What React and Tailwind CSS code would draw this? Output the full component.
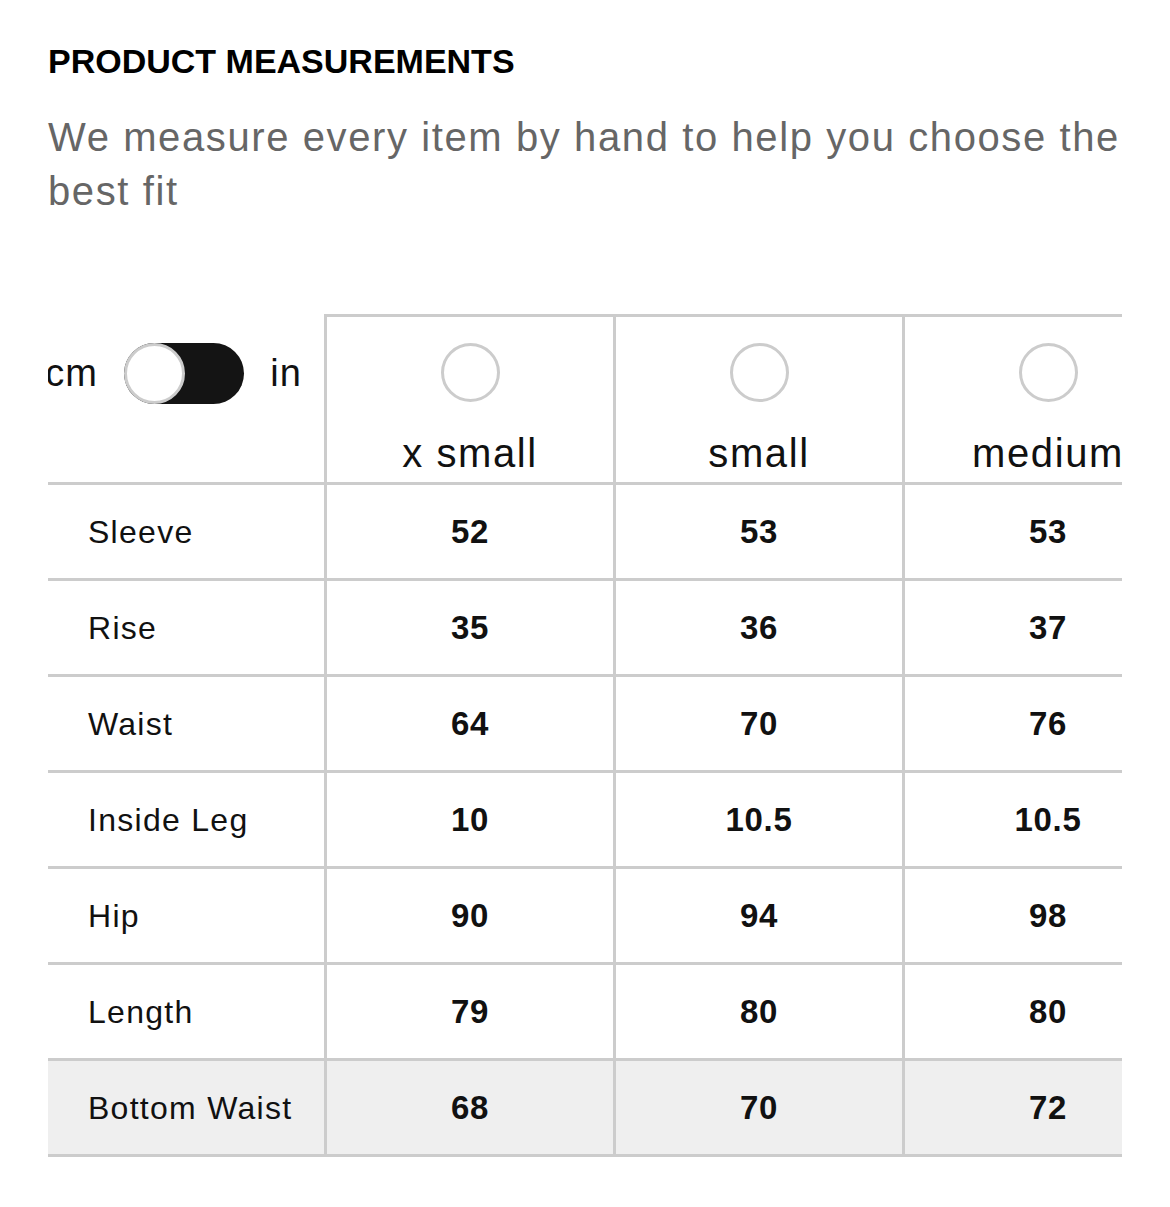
import React, { useState } from "react";

const sizes = ["x small", "small", "medium"];

const rows = [
  { label: "Sleeve", values: ["52", "53", "53"] },
  { label: "Rise", values: ["35", "36", "37"] },
  { label: "Waist", values: ["64", "70", "76"] },
  { label: "Inside Leg", values: ["10", "10.5", "10.5"] },
  { label: "Hip", values: ["90", "94", "98"] },
  { label: "Length", values: ["79", "80", "80"] },
  { label: "Bottom Waist", values: ["68", "70", "72"] },
];

const font = { fontFamily: '"Liberation Sans", Arial, sans-serif' };

const App = () => {
  const [inches, setInches] = useState(false);

  return (
    <div className="min-h-[1207px] w-[1170px] bg-white pt-[38px] text-[#111]" style={font}>
      <div className="px-[48px]">
        <h2 className="text-[34px] font-bold leading-[46px] text-black">
          PRODUCT MEASUREMENTS
        </h2>
        <p className="mt-[26px] w-[1090px] text-[40px] leading-[54px] tracking-[0.04em] text-[#666]">
          We measure every item by hand to help you choose the best fit
        </p>
      </div>

      <div className="mt-[96px] ml-[48px] w-[1074px] overflow-hidden">
        <div className="w-max">
          {/* header row */}
          <div className="flex border-b-[3px] border-[#ccc]">
            <div className="flex w-[279px] items-start justify-end gap-[26px] border-r-[3px] border-[#ccc] pt-[29px] pr-[22px]">
              <span className="text-[38px] leading-[60px] tracking-[0.03em]">cm</span>
              <button
                onClick={() => setInches(!inches)}
                className="relative h-[61px] w-[120px] shrink-0 rounded-full bg-[#141414]"
              >
                <span
                  className={
                    inches
                      ? "absolute top-0 right-0 h-[61px] w-[61px] rounded-full border-[3px] border-[#ccc] bg-white"
                      : "absolute top-0 left-0 h-[61px] w-[61px] rounded-full border-[3px] border-[#ccc] bg-white"
                  }
                />
              </button>
              <span className="text-[38px] leading-[60px] tracking-[0.03em]">in</span>
            </div>
            {sizes.map((s) => (
              <div
                key={s}
                className="flex w-[289px] flex-col items-center border-t-[3px] border-r-[3px] border-[#ccc] pt-[26px] pb-[4px]"
              >
                <div className="h-[59px] w-[59px] rounded-full border-[3px] border-[#ccc]" />
                <div className="mt-[26px] text-[40px] leading-[50px] tracking-[0.04em]">{s}</div>
              </div>
            ))}
          </div>

          {/* data rows */}
          {rows.map((r, i) => (
            <div
              key={r.label}
              className={
                i === rows.length - 1
                  ? "flex h-[96px] border-b-[3px] border-[#ccc] bg-[#efefef]"
                  : "flex h-[96px] border-b-[3px] border-[#ccc]"
              }
            >
              <div className="flex w-[279px] items-center border-r-[3px] border-[#ccc] pl-[40px] text-[32px] tracking-[0.04em]">
                {r.label}
              </div>
              {r.values.map((v, j) => (
                <div
                  key={j}
                  className="flex w-[289px] items-center justify-center border-r-[3px] border-[#ccc] text-[33px] font-bold tracking-[0.02em]"
                >
                  {v}
                </div>
              ))}
            </div>
          ))}
        </div>
      </div>
    </div>
  );
};

export default App;
